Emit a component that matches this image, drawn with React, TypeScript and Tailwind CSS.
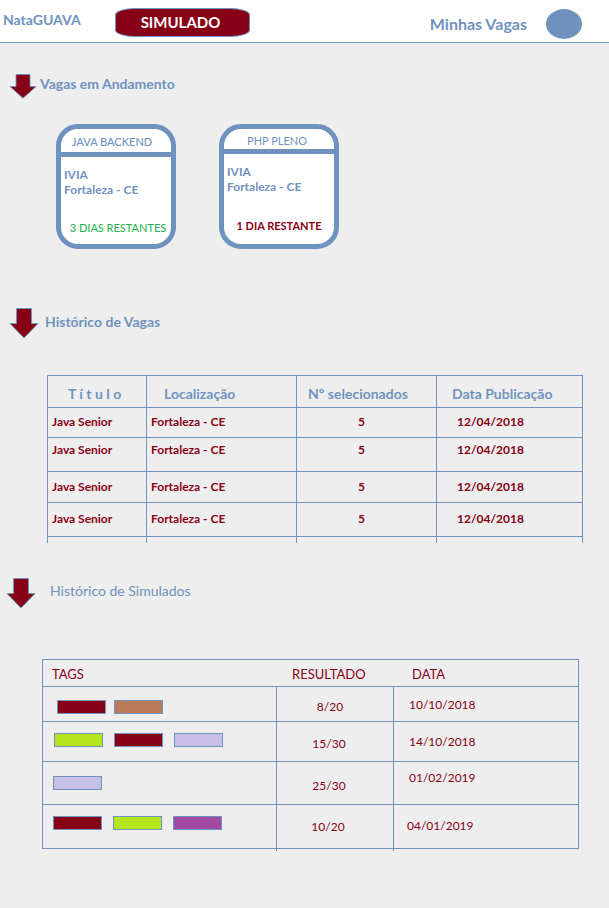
import type { ReactNode } from "react";

type Opening = {
  title: string;
  company: string;
  city: string;
  deadline: string;
  headerClass: string;
  deadlineClass: string;
};

const openings: Opening[] = [
  {
    title: "JAVA BACKEND",
    company: "IVIA",
    city: "Fortaleza - CE",
    deadline: "3 DIAS RESTANTES",
    headerClass: "h-7 pt-[5px] pr-2 font-medium",
    deadlineClass: "pl-1 text-[#22b14c]",
  },
  {
    title: "PHP PLENO",
    company: "IVIA",
    city: "Fortaleza - CE",
    deadline: "1 DIA RESTANTE",
    headerClass: "h-[25px] pt-1 pr-1",
    deadlineClass: "pb-0.5 font-bold text-[#880015]",
  },
];

const jobHistory = [
  { id: 1, rowClass: "h-[30px] *:pb-0.5" },
  { id: 2, rowClass: "h-[34px] *:pb-2.5" },
  { id: 3, rowClass: "h-[31px]" },
  { id: 4, rowClass: "h-[34px] *:pb-0.5" },
].map((row) => ({
  ...row,
  title: "Java Senior",
  place: "Fortaleza - CE",
  selected: 5,
  date: "12/04/2018",
}));

const testHistory = [
  {
    rowClass: "h-[35px]",
    tagsClass: "pl-3.5 pt-[13px] gap-2",
    tags: ["bg-[#880015]", "bg-[#b97a57]"],
    result: "8/20",
    resultClass: "pt-2.5 pr-2.5",
    date: "10/10/2018",
    dateClass: "pt-2 pl-[15px]",
  },
  {
    rowClass: "h-10",
    tagsClass: "pl-[11px] pt-[11px] gap-[11px]",
    tags: ["bg-[#b5e61d]", "bg-[#880015]", "bg-[#c8bfe7]"],
    result: "15/30",
    resultClass: "pt-3 pr-3",
    date: "14/10/2018",
    dateClass: "pt-2.5 pl-[15px]",
  },
  {
    rowClass: "h-[43px]",
    tagsClass: "pl-2.5 pt-3.5 gap-[11px]",
    tags: ["bg-[#c8bfe7]"],
    result: "25/30",
    resultClass: "pt-3.5 pr-3",
    date: "01/02/2019",
    dateClass: "pt-1.5 pl-[15px]",
  },
  {
    rowClass: "h-11",
    tagsClass: "pl-2.5 pt-[11px] gap-[11px]",
    tags: ["bg-[#880015]", "bg-[#b5e61d]", "bg-[#a349a4]"],
    result: "10/20",
    resultClass: "pt-3 pr-3.5",
    date: "04/01/2019",
    dateClass: "pt-[11px] pl-[13px]",
  },
];

function DownArrow({ small = false }: { small?: boolean }) {
  return (
    <svg
      viewBox="0 0 30 31"
      preserveAspectRatio="none"
      className={small ? "h-[25px] w-7 shrink-0" : "h-[31px] w-[30px] shrink-0"}
      aria-hidden="true"
    >
      <path
        d="M7.5 .5h15v15h6.5L15 30 1 15.500h6.500z"
        fill="#880015"
        stroke="#7092be"
        strokeWidth="1"
      />
    </svg>
  );
}

function SectionTitle({ className, children }: { className: string; children: ReactNode }) {
  return <h2 className={`text-sm leading-5 ${className}`}>{children}</h2>;
}

function OpeningCard({ job }: { job: Opening }) {
  return (
    <article className="flex h-[125px] w-[120px] flex-col overflow-hidden rounded-[22px] border-5 border-[#7092be] bg-white text-xs leading-[15px]">
      <h3 className={`border-b-5 border-[#7092be] text-center text-[11px] leading-[15px] ${job.headerClass}`}>
        {job.title}
      </h3>
      <div className="flex flex-1 flex-col px-[3px] pt-2.5 pb-[9px]">
        <p className="font-bold">{job.company}</p>
        <p className="font-bold">{job.city}</p>
        <p className={`mt-auto text-center text-[11px] leading-[15px] whitespace-nowrap ${job.deadlineClass}`}>
          {job.deadline}
        </p>
      </div>
    </article>
  );
}

const line = "border-[#7092be]";
const cell = `border-t border-l p-0 ${line}`;

export default function App() {
  return (
    <div className="min-h-screen bg-[#eeeeee] font-['Lato',sans-serif] text-[#7092be]">
      <header className="flex h-[43px] items-start border-b border-[#7092be] bg-white pl-[3px] pr-[27px]">
        <a href="#" className="w-28 pt-2.5 text-sm leading-5 font-bold">
          NataGUAVA
        </a>
        <button
          type="button"
          className="mt-2 h-[29px] w-[135px] rounded-[20px/7px] border border-[#7092be] bg-[#880015] pr-1 pb-0.5 text-[15px] leading-5 font-bold text-white"
        >
          SIMULADO
        </button>
        <a href="#" className="mt-3.5 ml-auto text-base leading-5 font-bold">
          Minhas Vagas
        </a>
        <button
          type="button"
          aria-label="Perfil"
          className="mt-[9px] ml-[19px] h-[30px] w-9 rounded-[50%] bg-[#7092be]"
        />
      </header>

      <main>
        <section>
          <div className="flex items-start gap-[3px] pt-[31px] pl-[9px]">
            <DownArrow small />
            <SectionTitle className="font-bold">Vagas em Andamento</SectionTitle>
          </div>
          <div className="mt-[25px] flex flex-wrap gap-[43px] pl-14">
            {openings.map((job) => (
              <OpeningCard key={job.title} job={job} />
            ))}
          </div>
        </section>

        <section className="pr-[26px]">
          <div className="flex items-center gap-1.5 pt-[59px] pl-[9px]">
            <DownArrow />
            <SectionTitle className="pb-1 font-bold">Histórico de Vagas</SectionTitle>
          </div>
          <div className="mt-9 pl-[47px]">
            <table className={`w-full table-fixed border-separate border-spacing-0 border-r text-xs leading-4 font-bold ${line}`}>
              <thead>
                <tr className="h-8 text-sm">
                  <th className={`w-[99px] pt-1! pl-5! text-left ${cell}`}>T í t u l o</th>
                  <th className={`w-[150px] pt-1! pl-[17px]! text-left ${cell}`}>Localização</th>
                  <th className={`w-[140px] pt-1! pl-[11px]! text-left ${cell}`}>Nº selecionados</th>
                  <th className={`pt-1! pl-[15px]! text-left ${cell}`}>Data Publicação</th>
                </tr>
              </thead>
              <tbody className="text-[#880015]">
                {jobHistory.map((row) => (
                  <tr key={row.id} className={row.rowClass}>
                    <td className={`border-t border-l pl-1 ${line}`}>{row.title}</td>
                    <td className={`border-t border-l pl-1 ${line}`}>{row.place}</td>
                    <td className={`border-t border-l pr-2.5 text-center ${line}`}>{row.selected}</td>
                    <td className={`border-t border-l pl-5 ${line}`}>{row.date}</td>
                  </tr>
                ))}
                <tr className="h-[7px]" aria-hidden="true">
                  <td className={cell} />
                  <td className={cell} />
                  <td className={cell} />
                  <td className={cell} />
                </tr>
              </tbody>
            </table>
          </div>
        </section>

        <section className="pr-[30px] pb-14">
          <div className="flex items-center gap-3.5 pt-[35px] pl-1.5">
            <DownArrow />
            <SectionTitle className="pb-1.5">Histórico de Simulados</SectionTitle>
          </div>
          <div className="mt-[50px] pl-[42px]">
            <table className="w-full table-fixed border-separate border-spacing-0 text-xs leading-5 text-[#880015]">
              <thead>
                <tr className="h-[27px] text-[13px]">
                  <th className={`w-[234px] border-t border-l pt-0.5 pl-[9px] text-left font-normal ${line}`}>TAGS</th>
                  <th className={`w-[117px] border-t pt-0.5 pl-4 text-left font-normal ${line}`}>RESULTADO</th>
                  <th className={`border-t border-r pt-0.5 pl-[19px] text-left font-normal ${line}`}>DATA</th>
                </tr>
              </thead>
              <tbody>
                {testHistory.map((row) => (
                  <tr key={row.date} className={`align-top ${row.rowClass}`}>
                    <td className={cell}>
                      <div className={`flex ${row.tagsClass}`}>
                        {row.tags.map((color) => (
                          <span key={color} className={`h-3.5 w-[49px] border ${line} ${color}`} />
                        ))}
                      </div>
                    </td>
                    <td className={`border-t border-l text-center ${line} ${row.resultClass}`}>{row.result}</td>
                    <td className={`border-t border-r border-l ${line} ${row.dateClass}`}>{row.date}</td>
                  </tr>
                ))}
                <tr className="h-[3px]" aria-hidden="true">
                  <td className={`border-t p-0 ${line}`} />
                  <td className={cell} />
                  <td className={cell} />
                </tr>
              </tbody>
            </table>
          </div>
        </section>
      </main>
    </div>
  );
}
